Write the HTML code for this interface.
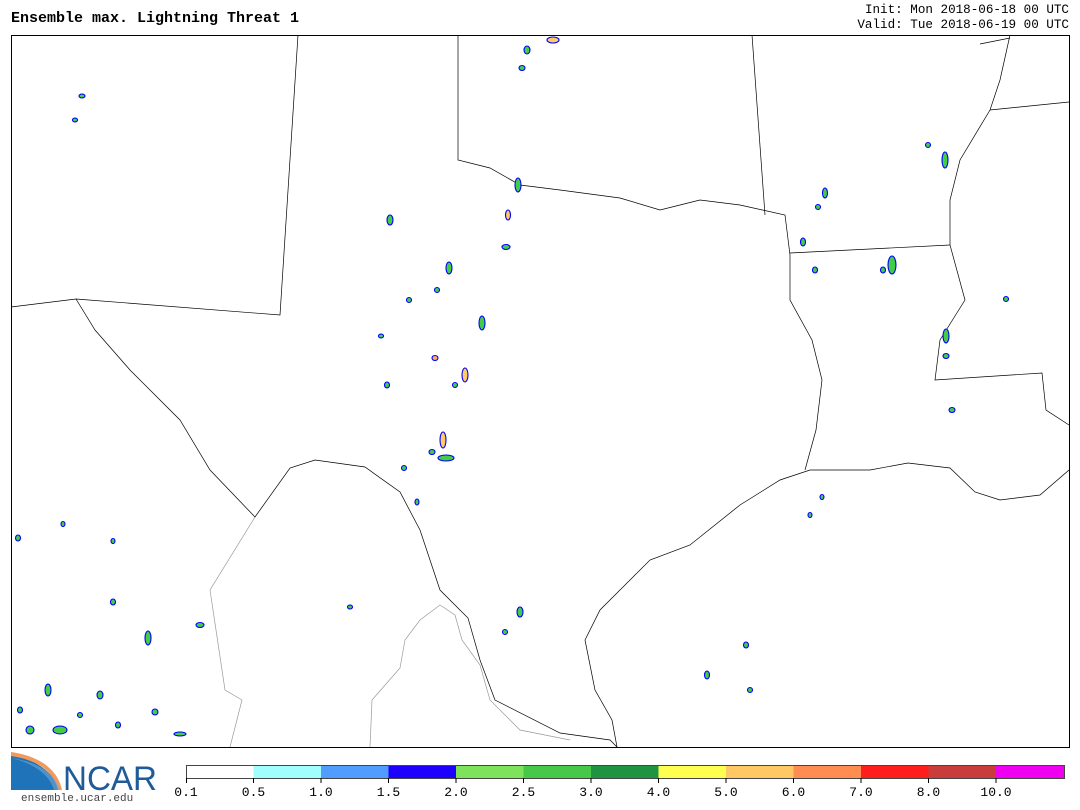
<!DOCTYPE html>
<html><head><meta charset="utf-8"><style>
body{margin:0;width:1080px;height:810px;background:#fff;overflow:hidden;position:relative;font-family:"Liberation Mono","DejaVu Sans Mono",monospace}
.t{position:absolute;white-space:pre}
</style></head><body>
<div class="t" style="left:11px;top:10px;font-size:15px;font-weight:bold">Ensemble max. Lightning Threat 1</div>
<div class="t" style="right:11px;top:3px;font-size:12.6px;text-align:right;line-height:15px">Init: Mon 2018-06-18 00 UTC
Valid: Tue 2018-06-19 00 UTC</div>
<svg width="1080" height="810" style="position:absolute;left:0;top:0">
<defs><clipPath id="c"><rect x="11" y="35" width="1058" height="712"/></clipPath></defs>
<g clip-path="url(#c)" fill="none" stroke-width="0.7">
<g stroke="#999">
<polyline points="255,517 210,590 225,690 242,700 230,747"/>
<polyline points="370,747 372,700 400,668 405,640 420,620 440,605 455,615 462,640 480,665 490,700 520,730 570,740"/>
</g>
<g stroke="#000">
<polyline points="298,35 280,315 76,299 11,307"/>
<polyline points="76,299 95,330 130,370 180,420 210,470 255,517 290,468 315,460 365,467 400,492 420,530 440,590 468,618 480,660 495,700 560,733 610,740 617,747"/>
<polyline points="458,35 458,160 490,168 520,185 560,190 620,198 660,210 700,200 740,205 785,215 790,255 790,300 812,340 822,380 816,430 805,470"/>
<polyline points="617,747 612,720 595,690 585,640 600,610 620,590 650,560 690,545 740,505 780,480 810,470 870,470 908,463 950,468 975,492 1000,500 1040,495 1069,470"/>
<polyline points="752,35 765,215"/>
<polyline points="790,253 950,245"/>
<polyline points="1010,35 1000,80 990,110 960,160 950,200 950,245 965,300 940,340 935,380 1042,373 1046,410 1069,425"/>
<polyline points="980,44 1010,38"/>
<polyline points="990,110 1069,102"/>
</g>
</g>
<g stroke="#00f" stroke-width="1.1" fill="#4c4">
<ellipse cx="553" cy="40" rx="6" ry="3" fill="#fc6"/><ellipse cx="527" cy="50" rx="3" ry="4"/><ellipse cx="522" cy="68" rx="3" ry="2.5"/>
<ellipse cx="82" cy="96" rx="3" ry="2"/><ellipse cx="75" cy="120" rx="2.5" ry="2"/>
<ellipse cx="518" cy="185" rx="3" ry="7"/><ellipse cx="508" cy="215" rx="2.5" ry="5" fill="#fc6"/><ellipse cx="506" cy="247" rx="4" ry="2.5"/>
<ellipse cx="449" cy="268" rx="3" ry="6"/><ellipse cx="437" cy="290" rx="2.5" ry="2.5"/><ellipse cx="482" cy="323" rx="3" ry="7"/>
<ellipse cx="435" cy="358" rx="3" ry="2.5" fill="#fa5"/><ellipse cx="465" cy="375" rx="3" ry="7" fill="#fc6"/><ellipse cx="455" cy="385" rx="2.5" ry="2.5"/>
<ellipse cx="443" cy="440" rx="3" ry="8" fill="#fc6"/><ellipse cx="446" cy="458" rx="8" ry="3"/><ellipse cx="432" cy="452" rx="3" ry="2.5"/>
<ellipse cx="404" cy="468" rx="2.5" ry="2.5"/><ellipse cx="417" cy="502" rx="2" ry="3"/><ellipse cx="390" cy="220" rx="3" ry="5"/>
<ellipse cx="387" cy="385" rx="2.5" ry="3"/><ellipse cx="381" cy="336" rx="2.5" ry="2"/><ellipse cx="409" cy="300" rx="2.5" ry="2.5"/>
<ellipse cx="520" cy="612" rx="3" ry="5"/><ellipse cx="505" cy="632" rx="2.5" ry="2.5"/>
<ellipse cx="945" cy="160" rx="3" ry="8"/><ellipse cx="928" cy="145" rx="2.5" ry="2.5"/><ellipse cx="825" cy="193" rx="2.5" ry="5"/>
<ellipse cx="818" cy="207" rx="2.5" ry="2.5"/><ellipse cx="892" cy="265" rx="4" ry="9"/><ellipse cx="883" cy="270" rx="2.5" ry="3"/>
<ellipse cx="946" cy="336" rx="3" ry="7"/><ellipse cx="946" cy="356" rx="3" ry="2.5"/><ellipse cx="952" cy="410" rx="3" ry="2.5"/>
<ellipse cx="1006" cy="299" rx="2.5" ry="2.5"/><ellipse cx="803" cy="242" rx="2.5" ry="4"/><ellipse cx="815" cy="270" rx="2.5" ry="3"/>
<ellipse cx="746" cy="645" rx="2.5" ry="3"/><ellipse cx="707" cy="675" rx="2.5" ry="4"/><ellipse cx="750" cy="690" rx="2.5" ry="2.5"/>
<ellipse cx="148" cy="638" rx="3" ry="7"/><ellipse cx="48" cy="690" rx="3" ry="6"/><ellipse cx="60" cy="730" rx="7" ry="4"/>
<ellipse cx="30" cy="730" rx="4" ry="4"/><ellipse cx="100" cy="695" rx="3" ry="4"/><ellipse cx="155" cy="712" rx="3" ry="3"/>
<ellipse cx="180" cy="734" rx="6" ry="2"/><ellipse cx="113" cy="602" rx="2.5" ry="3"/><ellipse cx="18" cy="538" rx="2.5" ry="3"/>
<ellipse cx="63" cy="524" rx="2" ry="2.5"/><ellipse cx="200" cy="625" rx="4" ry="2.5"/><ellipse cx="118" cy="725" rx="2.5" ry="3"/>
<ellipse cx="20" cy="710" rx="2.5" ry="3"/><ellipse cx="80" cy="715" rx="2.5" ry="2.5"/><ellipse cx="810" cy="515" rx="2" ry="2.5"/>
<ellipse cx="822" cy="497" rx="2" ry="2.5"/><ellipse cx="350" cy="607" rx="2.5" ry="2"/><ellipse cx="113" cy="541" rx="2" ry="2.5"/>
</g>
<g stroke="#000" stroke-width="1" fill="none"><rect x="11.5" y="35.5" width="1058" height="712"/></g>
<g>
<rect x="186" y="765" width="67.5" height="13" fill="#fff"/>
<rect x="253.5" y="765" width="67.5" height="13" fill="#a0fffe"/>
<rect x="321" y="765" width="67.5" height="13" fill="#509cff"/>
<rect x="388.5" y="765" width="67.5" height="13" fill="#1e00ff"/>
<rect x="456" y="765" width="67.5" height="13" fill="#7ee35a"/>
<rect x="523.5" y="765" width="67.5" height="13" fill="#48c848"/>
<rect x="591" y="765" width="67.5" height="13" fill="#1e9440"/>
<rect x="658.5" y="765" width="67.5" height="13" fill="#ffff50"/>
<rect x="726" y="765" width="67.5" height="13" fill="#ffc864"/>
<rect x="793.5" y="765" width="67.5" height="13" fill="#ff8c50"/>
<rect x="861" y="765" width="67.5" height="13" fill="#ff1e1e"/>
<rect x="928.5" y="765" width="67.5" height="13" fill="#c83c3c"/>
<rect x="996" y="765" width="68" height="13" fill="#f000f0"/>
<rect x="186.5" y="765.5" width="878" height="13" fill="none" stroke="#444"/>
<g stroke="#000"><line x1="186.5" y1="778" x2="186.5" y2="783"/><line x1="253.5" y1="778" x2="253.5" y2="783"/><line x1="321" y1="778" x2="321" y2="783"/><line x1="388.5" y1="778" x2="388.5" y2="783"/><line x1="456" y1="778" x2="456" y2="783"/><line x1="523.5" y1="778" x2="523.5" y2="783"/><line x1="591" y1="778" x2="591" y2="783"/><line x1="658.5" y1="778" x2="658.5" y2="783"/><line x1="726" y1="778" x2="726" y2="783"/><line x1="793.5" y1="778" x2="793.5" y2="783"/><line x1="861" y1="778" x2="861" y2="783"/><line x1="928.5" y1="778" x2="928.5" y2="783"/><line x1="996" y1="778" x2="996" y2="783"/></g>
</g>
<g font-family="Liberation Mono,monospace" font-size="13" text-anchor="middle" fill="#000">
<text x="186" y="796">0.1</text><text x="253.5" y="796">0.5</text><text x="321" y="796">1.0</text><text x="388.5" y="796">1.5</text><text x="456" y="796">2.0</text><text x="523.5" y="796">2.5</text><text x="591" y="796">3.0</text><text x="658.5" y="796">4.0</text><text x="726" y="796">5.0</text><text x="793.5" y="796">6.0</text><text x="861" y="796">7.0</text><text x="928.5" y="796">8.0</text><text x="996" y="796">10.0</text>
</g>
<path d="M11,752 L11,790 L60,790 C55,775 40,762 11,752Z" fill="#1f73b8"/>
<path d="M11,752 C40,756 58,770 62,790 L58,790 C54,772 38,760 11,756Z" fill="#f39a5b"/>
<path d="M11,758 C36,764 50,776 54,790 L60,790 C55,775 40,762 11,758Z" fill="#6fa8d8" opacity="0.6"/>
<text x="63" y="790" font-family="Liberation Sans,sans-serif" font-size="34" fill="#1f5a99" textLength="94" lengthAdjust="spacingAndGlyphs">NCAR</text>
<text x="21" y="801" font-family="Liberation Mono,monospace" font-size="11" fill="#444">ensemble.ucar.edu</text>
</svg>
</body></html>
